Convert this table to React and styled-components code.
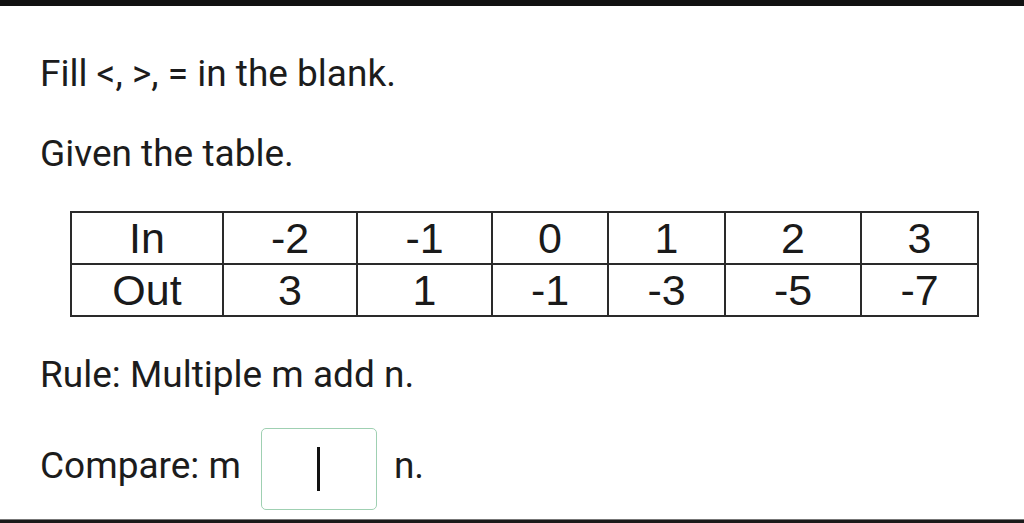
import React from "react";
import styled, { createGlobalStyle } from "styled-components";

const inputs = ["-2", "-1", "0", "1", "2", "3"];
const outputs = ["3", "1", "-1", "-3", "-5", "-7"];
const colWidths = [152, 134, 135, 116, 117, 136, 117];

const GlobalStyle = createGlobalStyle`
  html, body {
    margin: 0;
    padding: 0;
    background: #ffffff;
  }
  body {
    font-family: Roboto, "Noto Sans", sans-serif;
    color: #1c1c1c;
  }
`;

const Page = styled.div`
  width: 1024px;
  height: 523px;
  display: flex;
  flex-direction: column;
  background: #ffffff;
  overflow: hidden;
`;

const TopBar = styled.div`
  height: 6px;
  background: #111111;
  flex-shrink: 0;
`;

const BottomBar = styled.div`
  height: 3px;
  background: #1a1a1a;
  border-top: 1px solid #777777;
  margin-top: auto;
  flex-shrink: 0;
`;

const Content = styled.div`
  padding-left: 40px;
  display: flex;
  flex-direction: column;
`;

const Line = styled.p`
  margin: 0;
  margin-top: ${(props) => props.gap}px;
  font-size: 37px;
  line-height: 40px;
  white-space: nowrap;
`;

const Table = styled.table`
  margin-top: ${(props) => props.gap}px;
  margin-left: 30px;
  width: 907px;
  table-layout: fixed;
  border-collapse: collapse;
  font-family: "Liberation Sans", Arial, sans-serif;
  font-size: 43px;
  color: #1a1a1a;
`;

const Cell = styled.td`
  border: 2px solid #2a2a2a;
  height: 50px;
  padding: 0;
  text-align: center;
  line-height: 50px;
`;

const CompareRow = styled.div`
  margin-top: ${(props) => props.gap}px;
  display: flex;
  align-items: center;
  font-size: 37px;
  line-height: 40px;
  white-space: nowrap;
`;

const Label = styled.span`
  padding-bottom: 6px;
`;

const Blank = styled.div`
  width: 114px;
  height: 80px;
  margin: 0 17px 0 20px;
  border: 1.5px solid #9fd0b2;
  border-radius: 5px;
  display: flex;
  align-items: center;
  justify-content: center;
`;

const Caret = styled.div`
  width: 3px;
  height: 44px;
  background: #111111;
`;

export default function App() {
  return (
    <Page>
      <GlobalStyle />
      <TopBar />
      <Content>
        <Line gap={48}>Fill &lt;, &gt;, = in the blank.</Line>
        <Line gap={40}>Given the table.</Line>
        <Table gap={37}>
          <colgroup>
            {colWidths.map((w, i) => (
              <col key={i} style={{ width: w }} />
            ))}
          </colgroup>
          <tbody>
            <tr>
              <Cell>In</Cell>
              {inputs.map((v, i) => (
                <Cell key={i}>{v}</Cell>
              ))}
            </tr>
            <tr>
              <Cell>Out</Cell>
              {outputs.map((v, i) => (
                <Cell key={i}>{v}</Cell>
              ))}
            </tr>
          </tbody>
        </Table>
        <Line gap={38}>Rule: Multiple m add n.</Line>
        <CompareRow gap={33}>
          <Label>Compare: m</Label>
          <Blank>
            <Caret />
          </Blank>
          <Label>n.</Label>
        </CompareRow>
      </Content>
      <BottomBar />
    </Page>
  );
}
